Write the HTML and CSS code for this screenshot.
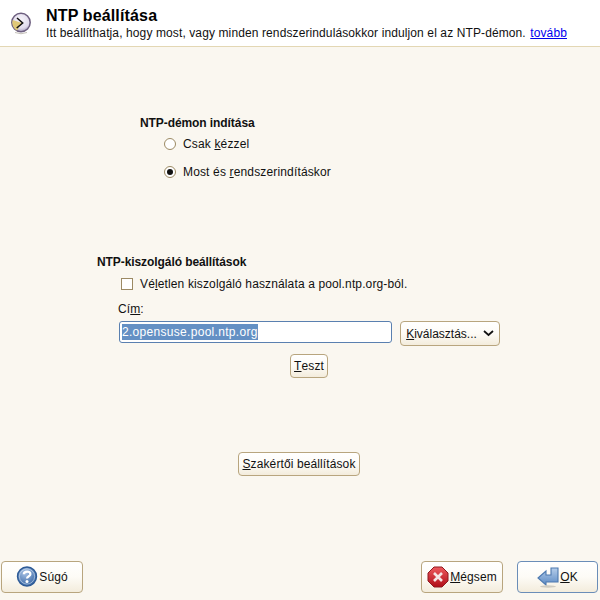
FILE: index.html
```html
<!DOCTYPE html>
<html lang="hu">
<head>
<meta charset="utf-8">
<title>NTP beállítása</title>
<link rel="stylesheet" href="styles.css">
</head>
<body>
<div class="window">
  <header class="header">
    <svg class="header-icon" width="26" height="26" viewBox="0 0 26 26">
      <defs>
        <radialGradient id="face" cx="50%" cy="35%" r="65%"><stop offset="0" stop-color="#f6f4fa"/><stop offset="0.7" stop-color="#e2dcec"/><stop offset="1" stop-color="#a9a0c0"/></radialGradient>
      </defs>
      <circle cx="13" cy="12.5" r="9.2" fill="url(#face)" stroke="#6d5f7f" stroke-width="1.5"/>
      <path d="M14 13 L4.6 10 A9 9 0 0 0 9 20.5 Z" fill="#e0c878"/>
      <path d="M9 8 L14.7 13 L8.7 18" fill="none" stroke="#111" stroke-width="1.5"/>
      <path d="M7 22.5 Q13 25 19 22.5" fill="none" stroke="#c4c0b8" stroke-width="1"/>
    </svg>
    <div class="header-text">
      <h1 class="title">NTP beállítása</h1>
      <p class="subtitle">Itt beállíthatja, hogy most, vagy minden rendszerindulásokkor induljon el az NTP-démon. <a class="more" href="#">tovább</a></p>
    </div>
  </header>
  <main class="content">
    <section class="daemon">
      <div class="group-title">NTP-démon indítása</div>
      <label class="radio-row first"><span class="radio"></span><span>Csak <u>k</u>ézzel</span></label>
      <label class="radio-row"><span class="radio on"></span><span>Most és <u>r</u>endszerindításkor</span></label>
    </section>
    <section class="server">
      <div class="group-title">NTP-kiszolgáló beállítások</div>
      <label class="check-row"><span class="check"></span><span>Vé<u>l</u>etlen kiszolgáló használata a pool.ntp.org-ból.</span></label>
      <div class="addr-label">Cí<u>m</u>:</div>
      <div class="addr-row">
        <div class="input"><span class="selected">2.opensuse.pool.ntp.org</span></div>
        <button class="btn select-btn" type="button"><span><u>K</u>iválasztás...</span>
          <svg width="11" height="7" viewBox="0 0 11 7"><path d="M1 1 L5.5 5 L10 1" fill="none" stroke="#111" stroke-width="1.7"/></svg>
        </button>
      </div>
      <div class="center-row test-row"><button class="btn test-btn" type="button"><u>T</u>eszt</button></div>
    </section>
    <div class="center-row expert-row"><button class="btn expert-btn" type="button"><u>S</u>zakértői beállítások</button></div>
  </main>
  <footer class="footer">
    <button class="btn big help" type="button">
      <svg width="22" height="22" viewBox="0 0 22 22">
        <defs><radialGradient id="blue" cx="40%" cy="30%" r="75%"><stop offset="0" stop-color="#a9c3e6"/><stop offset="1" stop-color="#2f5f9f"/></radialGradient></defs>
        <circle cx="11" cy="10.5" r="9.5" fill="url(#blue)" stroke="#2d5a96" stroke-width="1.4"/>
        <circle cx="11" cy="10.5" r="7.6" fill="none" stroke="#dfe9f6" stroke-width="0.8" opacity="0.7"/>
        <path d="M7.8 8.2 C8 4.8 14.4 4.8 14.4 8.2 C14.4 10.4 11 10.2 11 12.6" fill="none" stroke="#fff" stroke-width="2.2"/>
        <circle cx="11" cy="15.6" r="1.5" fill="#fff"/>
      </svg>
      <span>Súgó</span>
    </button>
    <div class="spacer"></div>
    <button class="btn big cancel" type="button">
      <svg width="22" height="22" viewBox="0 0 22 22">
        <defs><linearGradient id="red" x1="0" y1="0" x2="0" y2="1"><stop offset="0" stop-color="#ee5a5f"/><stop offset="1" stop-color="#b00d18"/></linearGradient></defs>
        <path d="M7 1 H15 L21 7 V15 L15 21 H7 L1 15 V7 Z" fill="url(#red)" stroke="#8e1a20" stroke-width="1"/>
        <path d="M7 7 L15 15 M15 7 L7 15" stroke="#f6e6e6" stroke-width="2.6"/>
      </svg>
      <span><u>M</u>égsem</span>
    </button>
    <button class="btn big ok" type="button">
      <svg width="22" height="22" viewBox="0 0 22 22">
        <defs><linearGradient id="arrow" x1="0" y1="0" x2="0" y2="1"><stop offset="0" stop-color="#b5cdea"/><stop offset="1" stop-color="#5d8bc4"/></linearGradient></defs>
        <path d="M1 12 L9 5 V9 H14 V2 H21 V16 H9 V19 Z" fill="url(#arrow)" stroke="#4d79b0" stroke-width="1.1"/>
        <ellipse cx="11" cy="20.5" rx="8" ry="1.2" fill="#cfcbc0"/>
      </svg>
      <span><u>O</u>K</span>
    </button>
  </footer>
</div>
</body>
</html>
```
FILE: styles.css
```css
html, body {
  margin: 0;
  padding: 0;
  height: 100%;
}
body {
  font-family: "Liberation Sans", Arial, sans-serif;
  font-size: 12px;
  letter-spacing: 0.11px;
  color: #111;
  background: #faf7f0;
}
.window {
  width: 600px;
  height: 600px;
  display: flex;
  flex-direction: column;
  overflow: hidden;
}
.header {
  height: 46px;
  box-sizing: content-box;
  display: flex;
  align-items: flex-start;
  background: #fff;
  border-bottom: 1px solid #e3d7b4;
}
.header-icon {
  margin: 10px 0 0 8px;
  flex: none;
}
.header-text {
  margin-left: 12px;
  padding-top: 7px;
}
.title {
  margin: 0;
  font-size: 16px;
  line-height: 18px;
  font-weight: bold;
  letter-spacing: 0.15px;
  color: #000;
}
.subtitle {
  margin: 1px 0 0;
  font-size: 12px;
  line-height: 15px;
  white-space: nowrap;
}
.more {
  color: #0000ee;
  margin-left: 1px;
}
.content {
  flex: 1;
  min-height: 0;
}
.group-title {
  font-weight: bold;
  line-height: 15px;
  letter-spacing: -0.08px;
}
.daemon {
  margin: 69px 0 0 140px;
}
.radio-row {
  display: flex;
  align-items: center;
  height: 28px;
  margin-left: 24px;
  gap: 7px;
  letter-spacing: 0.15px;
}
.radio-row.first {
  margin-top: -1px;
}
.radio {
  width: 10px;
  height: 10px;
  border: 1px solid #9c8a64;
  border-radius: 50%;
  background: #fff;
  position: relative;
  flex: none;
}
.radio.on::after {
  content: "";
  position: absolute;
  left: 2px;
  top: 2px;
  width: 6px;
  height: 6px;
  border-radius: 50%;
  background: #111;
}
.server {
  margin: 69px 0 0 97px;
}
.check-row {
  display: flex;
  align-items: center;
  height: 15px;
  margin: 6px 0 0 24px;
  gap: 7px;
  letter-spacing: 0.13px;
}
.check {
  width: 10px;
  height: 10px;
  border: 1px solid #9c8a64;
  background: #fff;
  flex: none;
}
.addr-label {
  margin: 11px 0 0 21px;
  line-height: 15px;
}
.addr-row {
  display: flex;
  align-items: flex-start;
  margin: 4px 0 0 22px;
  gap: 8px;
}
.input {
  width: 269px;
  height: 20px;
  border: 1px solid #5a80b0;
  border-radius: 3px;
  background: #fff;
  padding-left: 2px;
  display: flex;
  align-items: center;
}
.selected {
  background: #6490c4;
  color: #fff;
  line-height: 16px;
  letter-spacing: 0.3px;
}
.btn {
  font: inherit;
  letter-spacing: inherit;
  color: #111;
  border: 1px solid #b8a57e;
  border-radius: 4px;
  background: linear-gradient(#ffffff 0%, #fdfbf6 50%, #f3ecdc 100%);
  padding: 0;
  display: flex;
  align-items: center;
  justify-content: center;
}
.select-btn {
  width: 100px;
  height: 25px;
  gap: 6px;
  letter-spacing: 0;
}
.center-row {
  display: flex;
}
.test-row {
  margin: 8px 0 0 193px;
}
.test-btn {
  width: 38px;
  height: 24px;
}
.expert-row {
  margin: 74px 0 0 238px;
}
.expert-btn {
  width: 122px;
  height: 24px;
}
.footer {
  display: flex;
  align-items: flex-start;
  height: 39px;
  padding: 0 2px 0 1px;
}
.spacer {
  flex: 1;
}
.big {
  width: 82px;
  height: 32px;
  gap: 1px;
}
.cancel {
  margin-right: 14px;
}
.ok {
  width: 81px;
  border-color: #6a8db8;
}
u {
  text-underline-offset: 1px;
}
```
